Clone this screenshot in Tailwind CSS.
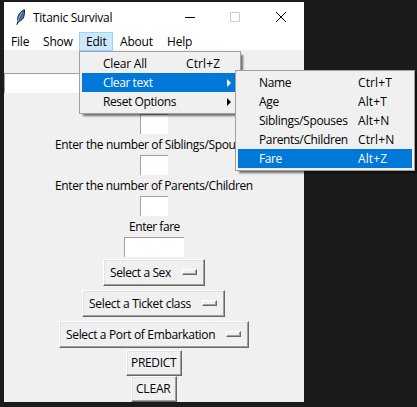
<!DOCTYPE html>
<html lang="en">
<head>
<meta charset="utf-8">
<title>Titanic Survival</title>
<script src="https://cdn.jsdelivr.net/npm/@tailwindcss/browser@4"></script>
</head>
<body class="relative h-[407px] w-[417px] overflow-hidden bg-[#1b1b1b] pt-[2px] pl-1 font-['Open_Sans','Noto_Sans',sans-serif] text-[12px] leading-[19px] tracking-[-0.32px] whitespace-nowrap text-black">
<main class="flex h-[400px] w-[300px] flex-col bg-[#f0f0f0]">
  <header class="flex h-[30px] shrink-0 items-center bg-white pl-[11px]">
    <svg class="h-4 w-3 shrink-0" viewBox="0 0 12 16"><path d="M9.5 .7C6.5 1.7 4 4.5 3 7.5c-.5 1.6-.4 3.2.1 4.6L2 15.5l1.6-3c2.5-.6 4.4-2.2 5.2-4.7.7-2.2.9-5 .7-7.1Z" fill="#4579b5" stroke="#1b2530" stroke-width="1"/><path d="M7.5 3C5.3 5.8 4.3 8.5 3.3 12" fill="none" stroke="#b5d8f5" stroke-width="1"/><path d="M8.5 2C6.5 5 5 8.5 3.8 11.5" fill="none" stroke="#182b42" stroke-width=".6"/></svg>
    <h1 class="ml-[6px] w-[152px] tracking-[-0.26px]">Titanic Survival</h1>
    <svg class="h-[10px] w-[10px]" viewBox="0 0 10 10"><path d="M0 5.5h10" stroke="#000"/></svg>
    <svg class="ml-[35px] h-[10px] w-[10px]" viewBox="0 0 10 10"><path d="M.5.5h9v9h-9z" fill="none" stroke="#ccc"/></svg>
    <svg class="ml-[36px] h-[10px] w-[10px]" viewBox="0 0 10 10"><path d="M0 0l10 10M10 0L0 10" stroke="#000"/></svg>
  </header>
  <nav class="flex h-[18px] shrink-0 bg-white tracking-[-0.2px]">
    <span class="w-8 pl-[7px]">File</span>
    <span class="w-[43px] pl-[7px]">Show</span>
    <span class="h-[19px] w-[34px] border border-[#99d1ff] bg-[#cce8ff] pl-[6px] leading-[17px]">Edit</span>
    <span class="w-[47px] pl-[7px]">About</span>
    <span class="pl-[7px]">Help</span>
  </nav>
  <form class="flex flex-col items-center pt-[23px]">
    <div class="h-5 w-full border-t border-l border-[#a0a0a0] bg-white"></div>
    <div class="mt-[21px] h-5 w-7 border-t border-l border-[#a0a0a0] bg-white"></div>
    <label class="mt-[1px] h-5 w-[198px] tracking-[-0.36px]">Enter the number of Siblings/Spouses</label>
    <div class="h-5 w-7 border-t border-l border-[#a0a0a0] bg-white"></div>
    <label class="mt-[1px] h-5 w-[198px] tracking-[-0.38px]">Enter the number of Parents/Children</label>
    <div class="h-5 w-7 border-t border-l border-[#a0a0a0] bg-white"></div>
    <label class="mt-[1px] h-5 w-[50px] tracking-[-0.45px]">Enter fare</label>
    <div class="h-5 w-[60px] border-t border-l border-[#a0a0a0] bg-white"></div>
    <div class="mt-[2px] flex h-[27px] w-[102px] justify-between border border-t-white border-r-[#696969] border-b-[#696969] border-l-white pt-[3px] pr-[7px] pl-[6px] shadow-[inset_-1px_-1px_#a0a0a0,inset_1px_1px_#e3e3e3]"><span class="tracking-[-0.4px]">Select a Sex</span><i class="mt-[6px] h-[6px] w-[15px] border border-t-white border-r-[#696969] border-b-[#696969] border-l-white shadow-[inset_-1px_-1px_#a0a0a0]"></i></div>
    <div class="mt-1 mr-[1px] flex h-[27px] w-[143px] justify-between border border-t-white border-r-[#696969] border-b-[#696969] border-l-white pt-[3px] pr-[7px] pl-[6px] shadow-[inset_-1px_-1px_#a0a0a0,inset_1px_1px_#e3e3e3]"><span>Select a Ticket class</span><i class="mt-[6px] h-[6px] w-[15px] border border-t-white border-r-[#696969] border-b-[#696969] border-l-white shadow-[inset_-1px_-1px_#a0a0a0]"></i></div>
    <div class="mt-1 flex h-[27px] w-[190px] justify-between border border-t-white border-r-[#696969] border-b-[#696969] border-l-white pt-[3px] pr-[7px] pl-[6px] shadow-[inset_-1px_-1px_#a0a0a0,inset_1px_1px_#e3e3e3]"><span class="tracking-[-0.34px]">Select a Port of Embarkation</span><i class="mt-[6px] h-[6px] w-[15px] border border-t-white border-r-[#696969] border-b-[#696969] border-l-white shadow-[inset_-1px_-1px_#a0a0a0]"></i></div>
    <div class="mt-[2px] flex h-[26px] w-[56px] border border-t-white border-r-[#696969] border-b-[#696969] border-l-white pt-[2px] pl-1 shadow-[inset_-1px_-1px_#a0a0a0,inset_1px_1px_#e3e3e3]">PREDICT</div>
    <div class="flex h-[26px] w-[46px] border border-t-white border-r-[#696969] border-b-[#696969] border-l-white pt-[2px] pl-1 tracking-[-0.2px] shadow-[inset_-1px_-1px_#a0a0a0,inset_1px_1px_#e3e3e3]">CLEAR</div>
  </form>
</main>

<section class="absolute top-[51px] left-[79px] h-[63px] w-[162px] border border-[#a0a0a0] bg-[#f0f0f0] p-[2px] shadow-[3px_3px_2px_-1px_rgba(0,0,0,0.55)]">
  <div class="flex h-[19px] pl-[21px]"><span class="w-[83px] tracking-[-0.2px]">Clear All</span><span class="tracking-[0.1px]">Ctrl+Z</span></div>
  <div class="flex h-[19px] items-center bg-[#0078d7] pl-[21px] text-white"><span class="w-[124px] tracking-[-0.4px]">Clear text</span><svg class="h-[8px] w-[4px]" viewBox="0 0 4 8"><path d="M0 0l4 4-4 4z" fill="#fff"/></svg></div>
  <div class="flex h-[19px] items-center pl-[21px]"><span class="w-[124px] tracking-[-0.4px]">Reset Options</span><svg class="h-[8px] w-[4px]" viewBox="0 0 4 8"><path d="M0 0l4 4-4 4z" fill="#000"/></svg></div>
</section>

<section class="absolute top-[70px] left-[235px] h-[101px] w-[180px] border border-[#a0a0a0] bg-[#f0f0f0] p-[2px] shadow-[3px_3px_2px_-1px_rgba(0,0,0,0.55)]">
  <div class="flex h-[19px] pl-[21px]"><span class="w-[99px]">Name</span><span class="tracking-[0.1px]">Ctrl+T</span></div>
  <div class="flex h-[19px] pl-[21px]"><span class="w-[99px]">Age</span><span class="tracking-[0.1px]">Alt+T</span></div>
  <div class="flex h-[19px] pl-[21px]"><span class="w-[99px]">Siblings/Spouses</span><span class="tracking-[0.1px]">Alt+N</span></div>
  <div class="flex h-[19px] pl-[21px]"><span class="w-[99px] tracking-[-0.36px]">Parents/Children</span><span class="tracking-[0.1px]">Ctrl+N</span></div>
  <div class="flex h-[19px] bg-[#0078d7] pl-[21px] text-white"><span class="w-[99px] tracking-[-0.4px]">Fare</span><span class="tracking-[0.1px]">Alt+Z</span></div>
</section>
</body>
</html>
